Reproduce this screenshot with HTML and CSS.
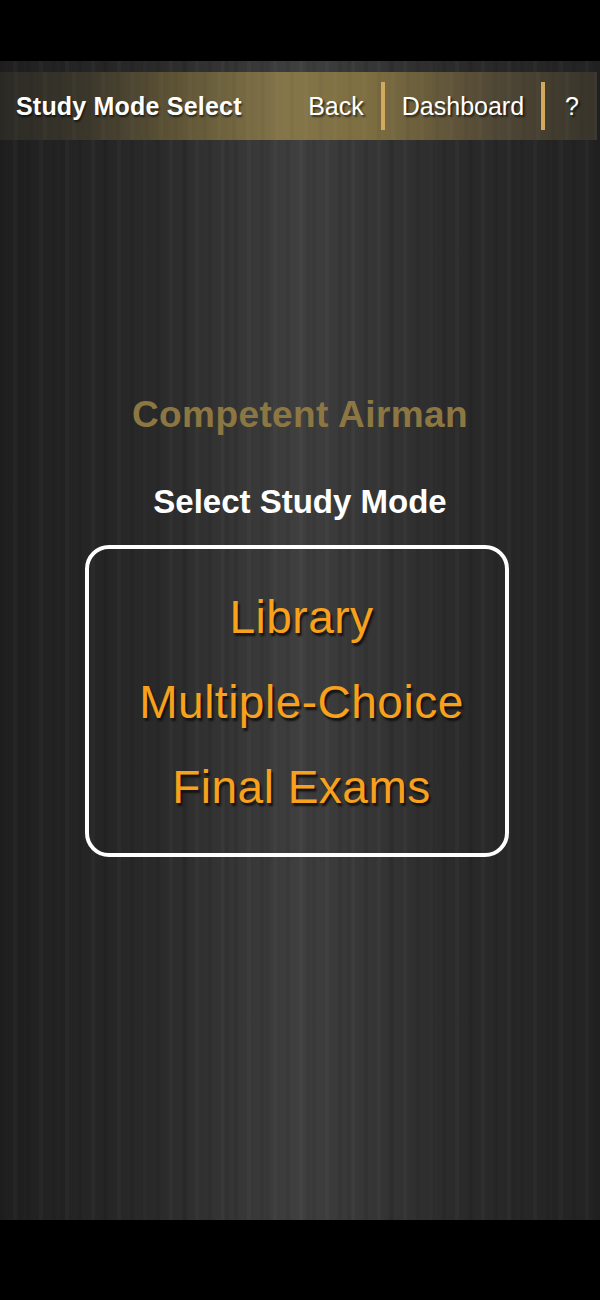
FILE: index.html
```html
<!DOCTYPE html>
<html lang="en">
<head>
  <meta charset="UTF-8">
  <meta name="viewport" content="width=device-width, initial-scale=1.0">
  <title>Study Mode Select</title>
  <link rel="stylesheet" href="styles.css">
</head>
<body>
  <div class="statusbar"></div>

  <div class="screen">
    <!-- Barra de topo -->
    <div class="topbar">
      <span class="title">Study Mode Select</span>
      <nav class="nav">
        <a class="nav-link">Back</a>
        <span class="sep"></span>
        <a class="nav-link">Dashboard</a>
        <span class="sep"></span>
        <a class="nav-link help">?</a>
      </nav>
    </div>

    <h1 class="course">Competent Airman</h1>
    <h2 class="prompt">Select Study Mode</h2>

    <!-- Modos -->
    <div class="modes">
      <a class="mode">Library</a>
      <a class="mode">Multiple-Choice</a>
      <a class="mode">Final Exams</a>
    </div>
  </div>

  <div class="navbar"></div>
</body>
</html>
```

FILE: styles.css
```css
/* Base */
body {
  margin: 0;
  background: #000;
  font-family: "Liberation Sans", Arial, sans-serif;
  color: #fff;
}

.statusbar {
  height: 61px;
  background: #000;
}

.navbar {
  height: 80px;
  background: #000;
}

/* Fundo listrado */
.screen {
  height: 1159px;
  overflow: hidden;
  background:
    repeating-linear-gradient(90deg, rgba(0,0,0,0.07) 0 4px, transparent 4px 13px, rgba(255,255,255,0.025) 13px 17px, transparent 17px 26px),
    repeating-linear-gradient(90deg, transparent 0 19px, rgba(0,0,0,0.06) 19px 24px, transparent 24px 41px),
    linear-gradient(90deg, #1f1f1f 0%, #292929 25%, #3f3f3f 50%, #2b2b2b 75%, #222 100%);
  padding-top: 11px;
  box-sizing: border-box;
}

/* Topo */
.topbar {
  height: 68px;
  margin-right: 3px;
  display: flex;
  align-items: center;
  padding: 0 18px 0 16px;
  background:
    repeating-linear-gradient(90deg, rgba(0,0,0,0.035) 0 4px, transparent 4px 14px, rgba(255,255,255,0.02) 14px 18px, transparent 18px 29px),
    linear-gradient(90deg, #2b2a25 0%, #3a362b 14%, #5f5536 30%, #85764a 48%, #7d6e41 62%, #524936 82%, #38342b 100%);
}

.title {
  font-size: 25px;
  font-weight: bold;
  letter-spacing: 0.2px;
  text-shadow: 1px 2px 2px rgba(0,0,0,0.6);
}

.nav {
  margin-left: auto;
  display: flex;
  align-items: center;
  gap: 17px;
}

.nav-link {
  font-size: 25px;
  color: #fff;
  text-shadow: 2px 2px 2px rgba(0,0,0,0.6);
}

.help {
  margin-left: 3px;
}

.sep {
  width: 4px;
  height: 48px;
  background: #d3a85f;
}

/* Titulos */
.course {
  margin: 256px 0 0;
  font-size: 37px;
  line-height: 37px;
  letter-spacing: 0.4px;
  text-align: center;
  color: #8c7743;
}

.prompt {
  margin: 52px 0 0;
  font-size: 33px;
  line-height: 33px;
  text-align: center;
  color: #fff;
}

/* Caixa dos modos */
.modes {
  width: 424px;
  margin: 27px 0 0 85px;
  box-sizing: border-box;
  padding: 26px 0 23px 9px;
  border: 4px solid #fff;
  border-radius: 24px;
  display: flex;
  flex-direction: column;
  align-items: center;
}

.mode {
  font-size: 46px;
  line-height: 85px;
  letter-spacing: 0.5px;
  color: #f8a11c;
  text-shadow: 2px 3px 2px #141414;
}
```
